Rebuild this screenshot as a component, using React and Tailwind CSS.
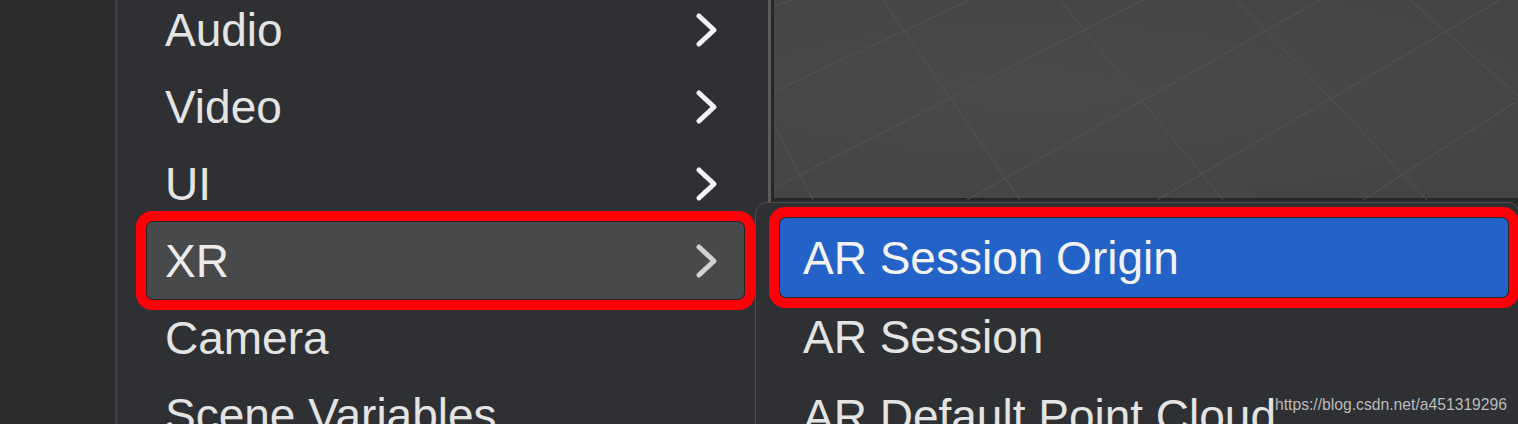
import React from 'react'

// Unity-style "GameObject" context menu with the XR submenu open.

const menuItems = [
    { label: 'Audio', sub: true },
    { label: 'Video', sub: true },
    { label: 'UI', sub: true },
    { label: 'XR', sub: true, active: true },
    { label: 'Camera' },
    { label: 'Scene Variables' },
]

const subItems = [
    { label: 'AR Session Origin', active: true },
    { label: 'AR Session' },
    { label: 'AR Default Point Cloud' },
]

// grid lines of the scene view, local coords (scene starts at x=774)
const gridLines = [
    [-1, 7, 19, 0],
    [-1, 92, 196, 0],
    [0, 188, 369, 0],
    [193, 200, 546, 0],
    [383, 200, 726, 0],
    [589, 200, 760, 90],
    [-1, 123, 39, 200],
    [109, 0, 246, 200],
    [286, 0, 449, 200],
    [463, 0, 653, 200],
    [636, 0, 760, 110],
]

function Chevron({ dim }) {
    return (
        <svg width="22" height="34" viewBox="0 0 22 34" className="shrink-0">
            <polyline
                points="3,3 18,17 3,31"
                fill="none"
                stroke={dim ? '#d2d2d2' : '#f4f4f4'}
                strokeWidth="5"
                strokeLinecap="round"
                strokeLinejoin="round"
            />
        </svg>
    )
}

function SceneGrid() {
    return (
        <svg width="744" height="200" viewBox="0 0 744 200" className="block">
            {gridLines.map(([x1, y1, x2, y2], i) => (
                <line key={i} x1={x1} y1={y1} x2={x2} y2={y2} stroke="#545454" strokeWidth="1" />
            ))}
        </svg>
    )
}

export default function App() {
    return (
        <div className="relative w-[1518px] h-[424px] overflow-hidden flex bg-[#2a2b2d] font-['Liberation_Sans',Arial,sans-serif]">
            {/* hierarchy panel edge */}
            <div className="w-[115px] bg-[#2b2c2e]" />
            <div className="w-[3px] bg-[#3c3d40]" />

            {/* main menu */}
            <div className="w-[650px] bg-[#2f3033]">
                <div className="flex flex-col -mt-[9px]">
                    {menuItems.map((item) => (
                        <div
                            key={item.label}
                            className={
                                item.active
                                    ? 'h-[77px] shrink-0 ml-[29px] mr-[24px] pl-[18px] pr-[26px] flex items-center justify-between rounded-[6px] bg-[#48494b] text-[#ececec] text-[46px] shadow-[0_0_0_1px_#26272a,0_0_0_11px_#ff0008]'
                                    : 'h-[77px] shrink-0 ml-[29px] mr-[24px] pl-[18px] pr-[26px] flex items-center justify-between text-[#e4e4e4] text-[46px]'
                            }
                        >
                            <span className="leading-none whitespace-nowrap">{item.label}</span>
                            {item.sub && <Chevron dim={item.active} />}
                        </div>
                    ))}
                </div>
            </div>

            <div className="w-[3px] bg-[#5a5b5d]" />
            <div className="w-[3px] bg-[#262729]" />

            {/* scene view */}
            <div className="flex-1 flex flex-col">
                <div className="h-[200px] bg-[radial-gradient(ellipse_at_35%_45%,#4a4a4a,#434343)] border-b-2 border-[#262626]">
                    <SceneGrid />
                </div>
                <div className="flex-1 bg-[#2a2b2d]" />
            </div>

            {/* XR submenu */}
            <div className="absolute left-[755px] top-[202px] w-[765px] h-[260px] rounded-t-[12px] border border-[#4e4f52] bg-[#2f3033] pt-[15px] pl-[24px]">
                {subItems.map((item) => (
                    <div
                        key={item.label}
                        className={
                            item.active
                                ? 'h-[79px] w-[728px] px-[23px] flex items-center rounded-[6px] bg-[#2362c6] text-[#f3f3f3] text-[46px] shadow-[0_0_0_1px_#26272a,0_0_0_11px_#ff0008]'
                                : 'h-[79px] w-[728px] px-[23px] flex items-center text-[#e4e4e4] text-[46px]'
                        }
                    >
                        <span className="leading-none whitespace-nowrap">{item.label}</span>
                    </div>
                ))}
            </div>

            {/* watermark */}
            <div className="absolute left-[1275px] top-[395px] leading-[20px] text-[15.7px] text-[#d6d6d6]/85 whitespace-nowrap">
                https://blog.csdn.net/a451319296
            </div>
        </div>
    )
}
